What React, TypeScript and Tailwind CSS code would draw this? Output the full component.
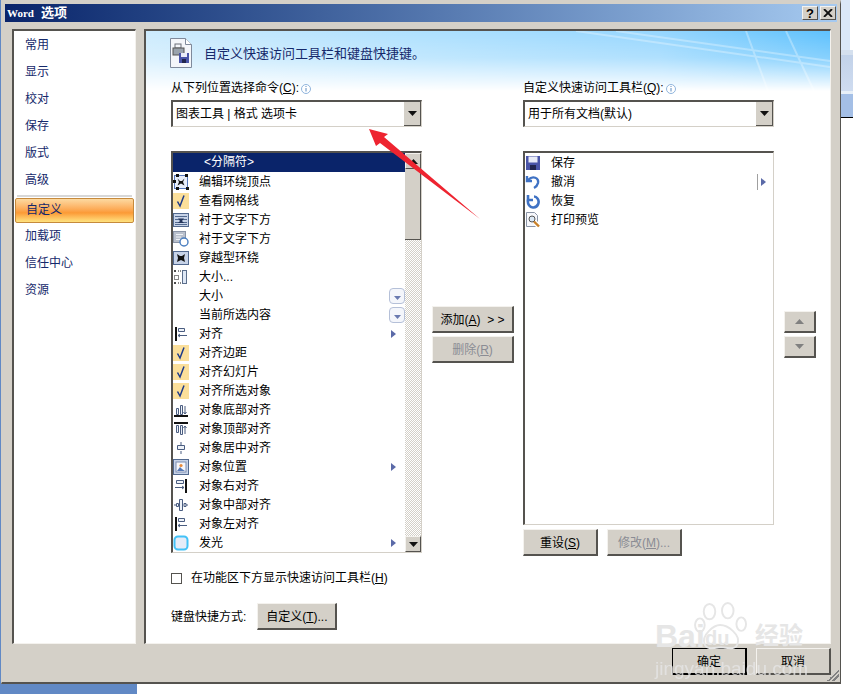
const FONT = '"Liberation Sans","Noto Sans CJK SC",sans-serif'

function Check() {
  return (
    <svg viewBox="0 0 16 16" className="w-4 h-4 bg-[#fbdf9a]">
      <path d="M4.5 8.5 L7 13 L11 2.5" fill="none" stroke="#1d3a8a" strokeWidth="1.5" />
    </svg>
  )
}

// align icons: a heavy black rule plus thin outlined bars
function Glyph({ bar, d, stroke = "#4a5d80" }: { bar?: string; d: string; stroke?: string }) {
  return (
    <svg viewBox="0 0 16 16" className="w-4 h-4">
      <path d={d} fill="#eef2f8" stroke={stroke} strokeWidth="1" />
      {bar && <path d={bar} fill="none" stroke="#111" strokeWidth="2" />}
    </svg>
  )
}

function WrapPoints() {
  return (
    <svg viewBox="0 0 16 16" className="w-4 h-4">
      <rect x="1.5" y="1.5" width="13" height="13" fill="#e8eefa" stroke="#5577bb" />
      <path d="M4.5 4.5 L7 7 L9 7 L11.5 4.5 L10 8 L11.5 11.5 L8 9.5 L4.5 11.5 L6 8 Z" fill="#111" />
      <rect x="3" y="0" width="3" height="3" fill="#111" />
      <rect x="12" y="0" width="3" height="3" fill="#111" />
      <rect x="0" y="6" width="3" height="3" fill="#111" />
      <rect x="3" y="13" width="3" height="3" fill="#111" />
      <rect x="13" y="13" width="3" height="3" fill="#111" />
    </svg>
  )
}

function BehindText() {
  return (
    <svg viewBox="0 0 16 16" className="w-4 h-4">
      <rect x="0.5" y="1.5" width="15" height="13" fill="#c7d3e8" stroke="#52698f" />
      <path d="M2 4.5h12M2 7.5h12M2 10.5h12M2 12.5h12" stroke="#52698f" />
      <path d="M5 6.5h6L9 9l2 2H5l2-2z" fill="#25365c" />
    </svg>
  )
}

function BehindText2() {
  return (
    <svg viewBox="0 0 16 16" className="w-4 h-4">
      <rect x="0.5" y="0.5" width="12" height="11" fill="#b9c0cc" stroke="#8a94a6" />
      <path d="M3 3.5h7M3 6h5M3 8.5h4" stroke="#eef1f6" />
      <circle cx="11" cy="11" r="4" fill="#fff" stroke="#4a7ec0" strokeWidth="1.4" />
    </svg>
  )
}

function Through() {
  return (
    <svg viewBox="0 0 16 16" className="w-4 h-4">
      <rect x="0.5" y="1.5" width="15" height="13" fill="#c7d3e8" stroke="#52698f" />
      <path d="M4 4 L7 6 L9 6 L12 4 L11 8 L12 12 L8 10 L4 12 L5 8 Z" fill="#111" />
    </svg>
  )
}

function SizeIcon() {
  return (
    <svg viewBox="0 0 16 16" className="w-4 h-4">
      <rect x="9.5" y="1.5" width="4" height="13" fill="#dfe8f5" stroke="#5c6f8c" />
      <rect x="1.5" y="6.5" width="4" height="4" fill="#fff" stroke="#888" />
      <path d="M1 2h2M5 2h1M7 2h1M1 14h2M5 14h1M7 14h1M2 1v2M2 13v2" stroke="#111" />
    </svg>
  )
}

function PictureIcon() {
  return (
    <svg viewBox="0 0 16 16" className="w-4 h-4">
      <rect x="0.5" y="0.5" width="15" height="15" fill="#c7d3e8" stroke="#52698f" />
      <rect x="3" y="3" width="10" height="10" fill="#f6f7fb" stroke="#7d8db0" />
      <circle cx="8" cy="6.5" r="1.6" fill="#e98a3a" />
      <path d="M4 12 L7 8 L9 10 L12 12 Z" fill="#5578b5" />
    </svg>
  )
}

function GlowIcon() {
  return (
    <svg viewBox="0 0 16 16" className="w-4 h-4">
      <rect x="1.5" y="1.5" width="13" height="13" rx="3.5" fill="#e6ecf8" stroke="#43c2f7" strokeWidth="2" />
    </svg>
  )
}

const alignLeft = { bar: "M3 1v14", d: "M5.5 2.5h6v3h-6zM5 9.5h9M5 9.5l2-1.5M5 9.5l2 1.5" }
const alignBottom = { bar: "M1 14h14", d: "M3.5 6.5h2v6h-2zM7.5 3.5h2v9h-2zM12 4v8M12 12l-1.5-2M12 12l1.5-2" }
const alignTop = { bar: "M1 2h14", d: "M3.5 4.5h2v7h-2zM7.5 4.5h2v9h-2zM12 13V5M12 5l-1.5 2M12 5l1.5 2" }
const alignCenter = { d: "M8 2v3M8 11v3M4.5 5.5h7v4h-7z" }
const alignRight = { bar: "M13 1v14", d: "M3.5 2.5h7v3h-7zM2 9.5h9M11 9.5l-2-1.5M11 9.5l-2 1.5" }
const alignMiddle = { d: "M6.5 2.5h3v11h-3zM3.5 6.5h2v3h-2zM1 8h2M11 6.5h2v3h-2zM13 8h2" }

type Row = { label: string; icon?: React.ReactNode; arrow?: boolean; drop?: boolean }

const rows: Row[] = [
  { label: "编辑环绕顶点", icon: <WrapPoints /> },
  { label: "查看网格线", icon: <Check /> },
  { label: "衬于文字下方", icon: <BehindText /> },
  { label: "衬于文字下方", icon: <BehindText2 /> },
  { label: "穿越型环绕", icon: <Through /> },
  { label: "大小...", icon: <SizeIcon /> },
  { label: "大小", drop: true },
  { label: "当前所选内容", drop: true },
  { label: "对齐", icon: <Glyph {...alignLeft} />, arrow: true },
  { label: "对齐边距", icon: <Check /> },
  { label: "对齐幻灯片", icon: <Check /> },
  { label: "对齐所选对象", icon: <Check /> },
  { label: "对象底部对齐", icon: <Glyph {...alignBottom} /> },
  { label: "对象顶部对齐", icon: <Glyph {...alignTop} /> },
  { label: "对象居中对齐", icon: <Glyph {...alignCenter} /> },
  { label: "对象位置", icon: <PictureIcon />, arrow: true },
  { label: "对象右对齐", icon: <Glyph {...alignRight} /> },
  { label: "对象中部对齐", icon: <Glyph {...alignMiddle} /> },
  { label: "对象左对齐", icon: <Glyph {...alignLeft} /> },
  { label: "发光", icon: <GlowIcon />, arrow: true },
]

const nav = ["常用", "显示", "校对", "保存", "版式", "高级"]
const nav2 = ["加载项", "信任中心", "资源"]

function Btn({ children, className = "", disabled = false }: { children: React.ReactNode; className?: string; disabled?: boolean }) {
  return (
    <div
      className={
        "flex items-center justify-center bg-[#d4d0c8] border-t border-l border-t-[#f4f2ee] border-l-[#f4f2ee] border-r-2 border-b-2 border-r-[#55534f] border-b-[#55534f] text-[12px] " +
        (disabled ? "text-[#8a8c94] " : "text-black ") +
        className
      }
    >
      {children}
    </div>
  )
}

function Tri({ up = false, color = "#111" }: { up?: boolean; color?: string }) {
  return (
    <svg viewBox="0 0 9 5" className="w-[9px] h-[5px]">
      <path d={up ? "M0 5 L4.5 0 L9 5 Z" : "M0 0 L9 0 L4.5 5 Z"} fill={color} />
    </svg>
  )
}

function Combo({ text }: { text: string }) {
  return (
    <div className="flex h-[27px] w-[251px] items-stretch bg-white border-t-2 border-l-2 border-t-[#55534f] border-l-[#55534f] border-r border-b border-r-[#d4d0c8] border-b-[#d4d0c8]">
      <div className="flex-1 pl-[3px] leading-[25px] text-[12px] text-black">{text}</div>
      <div className="flex w-[17px] items-center justify-center bg-[#d4d0c8] border-r border-b border-r-[#55534f] border-b-[#55534f]">
        <Tri />
      </div>
    </div>
  )
}

function MiniDrop() {
  return (
    <div className="flex h-4 w-4 items-end justify-center rounded-[4px] border border-[#b5c0d8] bg-[#f4f6fb] pb-[3px]">
      <svg viewBox="0 0 7 4" className="h-1 w-[7px]">
        <path d="M0 0 L7 0 L3.5 4 Z" fill="#6a7ab0" />
      </svg>
    </div>
  )
}

function MiniArrow() {
  return (
    <svg viewBox="0 0 5 8" className="w-[5px] h-2">
      <path d="M0 0 L5 4 L0 8 Z" fill="#5b6aa8" />
    </svg>
  )
}

function Info() {
  return (
    <svg viewBox="0 0 10 10" className="w-[10px] h-[10px] ml-[2px] mb-[3px]">
      <circle cx="5" cy="5" r="4.5" fill="#fff" stroke="#8fb4dc" />
      <path d="M5 2v1M5 4v3.5" stroke="#5d8cc2" />
    </svg>
  )
}

function U({ children }: { children: React.ReactNode }) {
  return <span className="underline">{children}</span>
}

function HeaderGraphic() {
  return (
    <svg viewBox="0 0 684 60" preserveAspectRatio="none" className="w-full h-full">
      <defs>
        <linearGradient id="sky" x1="0" y1="0" x2="1" y2="0">
          <stop offset="0" stopColor="#cdebfd" />
          <stop offset="0.4" stopColor="#aee0fe" />
          <stop offset="0.75" stopColor="#96d6fe" />
          <stop offset="1" stopColor="#5ec1fd" />
        </linearGradient>
        <linearGradient id="fade" x1="0" y1="0" x2="0" y2="1">
          <stop offset="0" stopColor="#fff" />
          <stop offset="0.45" stopColor="#fff" stopOpacity="0.75" />
          <stop offset="1" stopColor="#fff" stopOpacity="0" />
        </linearGradient>
        <mask id="fadeMask">
          <rect x="0" y="0" width="684" height="60" fill="url(#fade)" />
        </mask>
      </defs>
      <g mask="url(#fadeMask)">
        <rect x="0" y="0" width="684" height="60" fill="url(#sky)" />
        <path d="M430 0 L684 36 M470 0 L684 30 M600 0 L622 60 M640 0 L668 60" stroke="#ffffff" strokeOpacity="0.3" strokeWidth="2" fill="none" />
      </g>
    </svg>
  )
}

function QatIcon({ kind }: { kind: number }) {
  if (kind === 0)
    return (
      <svg viewBox="0 0 16 16" className="w-4 h-4">
        <rect x="1" y="1" width="14" height="14" fill="#4a55a8" />
        <rect x="3.5" y="1.5" width="9" height="6" fill="#e9ecf8" />
        <rect x="5" y="10" width="6" height="5" fill="#22264f" />
      </svg>
    )
  if (kind === 1)
    return (
      <svg viewBox="0 0 16 16" className="w-4 h-4">
        <path d="M2 2v5h5M3 6 C8 1 14 4 13 9 C12.5 11 11 13 9 14" fill="none" stroke="#3f72c4" strokeWidth="2.4" />
      </svg>
    )
  if (kind === 2)
    return (
      <svg viewBox="0 0 16 16" className="w-4 h-4">
        <path d="M3 2v5h5M3 6 C2 11 5 15 8.5 14.5 C13 14 15 9 12.5 5.5 C11.5 4 10 3.5 9 3.5" fill="none" stroke="#3f72c4" strokeWidth="2.6" />
      </svg>
    )
  return (
    <svg viewBox="0 0 16 16" className="w-4 h-4">
      <path d="M1.5 0.5h8l3 3v6M1.5 0.5v14h9" fill="#f6f7fb" stroke="#8a94a6" />
      <circle cx="7" cy="7" r="3" fill="#dbe8f5" stroke="#555" />
      <path d="M9 9.5 L14 14.5" stroke="#c9812a" strokeWidth="2.4" />
    </svg>
  )
}

export default function App() {
  return (
    <div className="relative h-[694px] w-[853px] overflow-hidden bg-white" style={{ fontFamily: FONT }}>
      {/* desktop behind the dialog */}
      <div className="absolute left-0 top-0 h-[694px] w-[1px] bg-[#6189c5]" />
      <div className="absolute left-0 top-[684px] h-[10px] w-[137px] bg-[#6189c5]" />
      <div className="absolute left-[841px] top-0 h-[50px] w-[9px] bg-[#dbe8f8]" />
      <div className="absolute left-[841px] top-[50px] h-[5px] w-[12px] bg-[#d5e0ee]" />
      <div className="absolute left-[841px] top-[55px] h-[36px] w-[12px] bg-gradient-to-b from-[#c2d2e9] to-[#cfdcf0]" />
      <div className="absolute left-[841px] top-[91px] h-[3px] w-[12px] bg-[#e8f0f8]" />
      <div className="absolute left-[841px] top-[94px] h-[23px] w-[12px] bg-[#a4bfe6]" />
      <div className="absolute left-[841px] top-[117px] h-[1px] w-[12px] bg-black" />

      <div className="relative ml-[1px] flex h-[684px] w-[840px] flex-col border border-t-[4px] border-[#d4d0c8] border-r-[#55534f] border-b-2 border-b-[#55534f] bg-[#d4d0c8] px-[3px]">
        {/* title bar */}
        <div className="flex h-[18px] flex-none items-center justify-between bg-gradient-to-r from-[#0a246a] to-[#a6caf0] pl-[2px] pr-[1px]">
          <div className="flex items-center font-bold leading-[18px] text-white">
            <span className="text-[11px]" style={{ fontFamily: '"Liberation Serif",serif' }}>Word</span>
            <span className="ml-[7px] text-[13px]">选项</span>
          </div>
          <div className="flex gap-[2px]">
            <Btn className="h-[14px] w-[16px] !border-r !border-b font-bold !text-[13px] leading-none">?</Btn>
            <Btn className="h-[14px] w-[16px] !border-r !border-b">
              <svg viewBox="0 0 10 8" className="h-2 w-[10px]">
                <path d="M1 0 L9 8 M9 0 L1 8" stroke="#111" strokeWidth="1.8" />
              </svg>
            </Btn>
          </div>
        </div>

        <div className="flex flex-1 gap-[8px] pl-[7px] pr-[6px] pt-[7px] pb-[38px]">
          {/* nav */}
          <div className="flex w-[124px] flex-none flex-col border-t-2 border-l-2 border-t-[#55534f] border-l-[#55534f] border-r border-b border-r-[#f4f2ee] border-b-[#f4f2ee] bg-white px-[1px] pt-[1px] text-[12px] text-[#15296b]">
            {nav.map((n) => (
              <div key={n} className="h-[27px] pl-[10px] leading-[27px]">{n}</div>
            ))}
            <div className="mx-[2px] mt-[1px] h-[2px] bg-[#d8d8d8]" />
            <div className="mt-[1px] h-[25px] rounded-[2px] border border-[#c68a3c] bg-gradient-to-b from-[#fcd9a0] via-[#fb9a35] via-60% to-[#fee27e] pl-[10px] leading-[23px]">自定义</div>
            {nav2.map((n) => (
              <div key={n} className="h-[27px] pl-[10px] leading-[27px]">{n}</div>
            ))}
          </div>

          {/* main panel */}
          <div className="relative flex flex-1 flex-col border-t-2 border-l-2 border-t-[#55534f] border-l-[#55534f] border-r border-b border-r-[#f4f2ee] border-b-[#f4f2ee] bg-white text-[12px] text-black">
            <div className="absolute inset-x-0 top-0 h-[60px]">
              <HeaderGraphic />
            </div>

            <div className="relative flex flex-1 flex-col pl-[25px]">
              <div className="mt-[5px] flex h-[36px] items-center">
                <svg viewBox="0 0 22 30" className="-ml-[1px] mb-[3px] h-[30px] w-[22px]">
                  <path d="M0.5 0.5h15l6 6v23H0.5z" fill="#f4f6fa" stroke="#7f8a9c" />
                  <path d="M15.5 0.5v6h6" fill="#fff" stroke="#7f8a9c" />
                  <rect x="5" y="6" width="6" height="4" fill="#f4f6fa" stroke="#6a6f78" />
                  <rect x="3" y="10" width="11" height="7" fill="#9aa3ad" stroke="#555" />
                  <rect x="9" y="15" width="10" height="10" fill="#4a55a8" />
                  <rect x="11" y="15" width="6" height="4" fill="#e9ecf8" />
                  <rect x="12" y="21" width="4" height="4" fill="#22264f" />
                </svg>
                <span className="ml-[12px] text-[13px] text-[#15296b]">自定义快速访问工具栏和键盘快捷键。</span>
              </div>

              <div className="mt-[7px] flex">
                <div className="w-[352px] flex-none">
                  <div className="flex h-[18px] items-end">从下列位置选择命令(<U>C</U>):<Info /></div>
                  <div className="mt-[3px]"><Combo text="图表工具 | 格式 选项卡" /></div>
                  <div className="mt-[24px] flex">
                    <div className="flex h-[402px] w-[251px] flex-none border-t-2 border-l-2 border-t-[#55534f] border-l-[#55534f] border-r border-b border-r-[#d4d0c8] border-b-[#d4d0c8]">
                      <div className="w-[232px]">
                        <div className="h-[19px] bg-[#0a246a] pl-[31px] leading-[19px] text-white">&lt;分隔符&gt;</div>
                        {rows.map((r, i) => (
                          <div key={i} className="flex h-[19px] items-center">
                            <div className="flex w-[26px] flex-none items-center">{r.icon}</div>
                            <span className="flex-1">{r.label}</span>
                            {r.arrow && <div className="mr-[9px]"><MiniArrow /></div>}
                            {r.drop && <MiniDrop />}
                          </div>
                        ))}
                      </div>
                      <div className="flex w-[16px] flex-col bg-[repeating-conic-gradient(#d4d0c8_0%_25%,#ffffff_0%_50%)] bg-[length:2px_2px]">
                        <Btn className="h-[16px] w-[16px] !border-r !border-b"><Tri up /></Btn>
                        <div className="h-[71px] border-r border-b border-r-[#55534f] border-b-[#55534f] bg-[#d4d0c8]" />
                        <div className="flex-1" />
                        <Btn className="h-[16px] w-[16px] !border-r !border-b"><Tri /></Btn>
                      </div>
                    </div>
                    <div className="ml-[10px] mt-[155px] flex flex-none flex-col gap-[3px]">
                      <Btn className="h-[27px] w-[82px] pt-[2px]"><span>添加(<U>A</U>)&nbsp;&nbsp;&gt; &gt;</span></Btn>
                      <Btn disabled className="h-[27px] w-[82px] pt-[2px]"><span>删除(<U>R</U>)</span></Btn>
                    </div>
                  </div>
                </div>

                <div className="w-[251px] flex-none">
                  <div className="flex h-[18px] items-end">自定义快速访问工具栏(<U>Q</U>):<Info /></div>
                  <div className="mt-[3px]"><Combo text="用于所有文档(默认)" /></div>
                  <div className="mt-[24px] h-[374px] border-t-2 border-l-2 border-t-[#55534f] border-l-[#55534f] border-r border-b border-r-[#d4d0c8] border-b-[#d4d0c8]">
                    {["保存", "撤消", "恢复", "打印预览"].map((t, i) => (
                      <div key={t} className="flex h-[19px] items-center">
                        <div className="w-[26px] flex-none"><QatIcon kind={i} /></div>
                        <span className="flex-1">{t}</span>
                        {i === 1 && (
                          <div className="mr-[7px] flex h-[16px] items-center border-l border-l-[#a0a0a0] pl-[3px]"><MiniArrow /></div>
                        )}
                      </div>
                    ))}
                  </div>
                  <div className="mt-[4px] flex gap-[9px]">
                    <Btn className="h-[27px] w-[75px] pt-[2px]"><span>重设(<U>S</U>)</span></Btn>
                    <Btn disabled className="h-[27px] w-[75px] pt-[2px]"><span>修改(<U>M</U>)...</span></Btn>
                  </div>
                </div>

                <div className="ml-[10px] mt-[232px] flex flex-col gap-[3px]">
                  <Btn className="h-[22px] w-[32px]"><Tri up color="#808080" /></Btn>
                  <Btn className="h-[22px] w-[32px]"><Tri color="#808080" /></Btn>
                </div>
              </div>

              <div className="mt-[13px] flex items-center gap-[9px]">
                <div className="h-[11px] w-[11px] border border-[#55534f] bg-white" />
                <span>在功能区下方显示快速访问工具栏(<U>H</U>)</span>
              </div>
              <div className="mt-[16px] flex items-center">
                <span>键盘快捷方式:</span>
                <Btn className="ml-[11px] h-[27px] w-[80px] pt-[1px]"><span>自定义(<U>T</U>)...</span></Btn>
              </div>
            </div>
          </div>
        </div>

        {/* bottom buttons */}
        <div className="absolute bottom-[7px] right-[9px] flex gap-[9px]">
          <div className="flex h-[27px] w-[75px] items-center justify-center border border-black border-r-2 border-b-2 pt-[1px] text-[12px]">确定</div>
          <Btn className="h-[27px] w-[75px] !bg-transparent pt-[1px]">取消</Btn>
        </div>
        <div className="absolute bottom-[1px] right-[1px] h-[12px] w-[12px] bg-[linear-gradient(135deg,transparent_50%,#808080_50%,#808080_60%,transparent_60%,transparent_70%,#808080_70%,#808080_80%,transparent_80%)]" />
      </div>

      {/* red annotation arrow */}
      <svg viewBox="0 0 853 694" className="absolute inset-0 h-full w-full pointer-events-none">
        <path d="M369 129 L388 134 L384 137 L480 219 L380 143 L376 146 Z" fill="#ee2430" />
      </svg>

      {/* watermark */}
      <div className="absolute left-[655px] top-[600px] h-[85px] w-[152px] text-[#e6e6e6]">
        <svg viewBox="0 0 60 52" className="absolute left-[38px] top-[2px] h-[50px] w-[58px]">
          <g fill="none" stroke="#e6e6e6" strokeWidth="2">
            <ellipse cx="17" cy="10" rx="6" ry="8" />
            <ellipse cx="36" cy="9" rx="6" ry="8" />
            <ellipse cx="7" cy="24" rx="5" ry="7" />
            <ellipse cx="50" cy="23" rx="5" ry="7" />
            <path d="M12 44 C8 34 22 24 28 24 C36 24 50 34 46 44 C44 50 36 48 29 47 C22 48 14 50 12 44 Z" />
          </g>
        </svg>
        <span className="absolute left-0 top-[20px] text-[32px] font-bold leading-[32px]">Bai</span>
        <span className="absolute left-[50px] top-[28px] text-[20px] font-bold leading-[20px]">du</span>
        <span className="absolute left-[100px] top-[22px] text-[24px] font-bold leading-[28px]">经验</span>
        <span className="absolute left-0 top-[56px] text-[19px] leading-[26px] opacity-80">jingyan.baidu.com</span>
      </div>
    </div>
  )
}
